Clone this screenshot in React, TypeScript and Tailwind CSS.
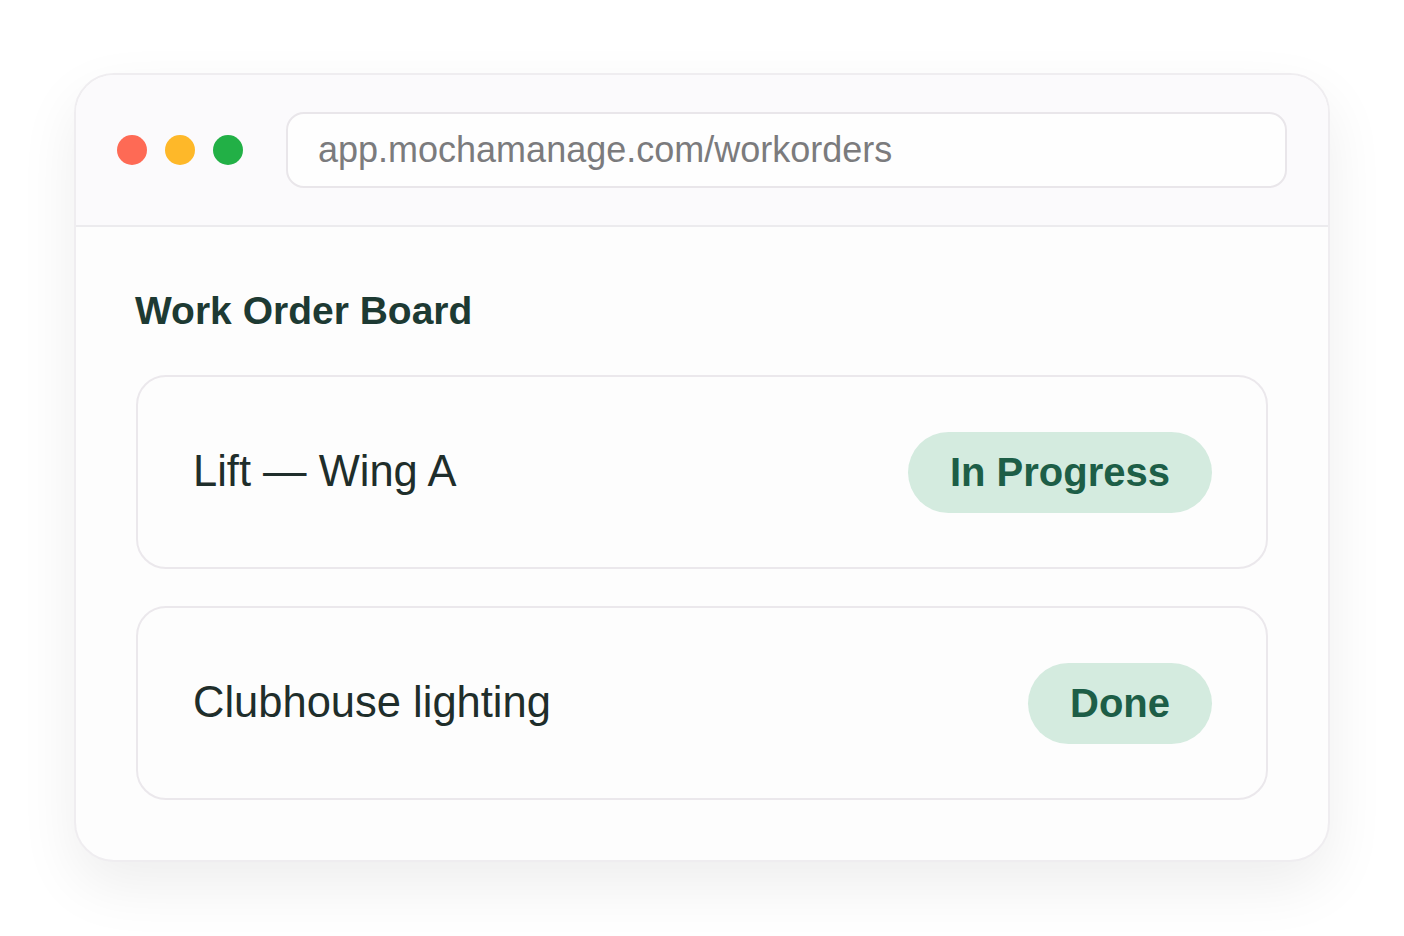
export default function App() {
  const orders = [
    { title: "Lift — Wing A", status: "In Progress" },
    { title: "Clubhouse lighting", status: "Done" },
  ];

  return (
    <div className="w-[1404px] h-[936px] bg-white pt-[73px] pl-[74px] font-['Liberation_Sans',Arial,sans-serif]">
      <div className="w-[1256px] h-[789px] rounded-[40px] border-2 border-[#efedf0] bg-[#fdfdfd] shadow-[0_24px_60px_rgba(0,0,0,0.07)] overflow-hidden flex flex-col">
        {/* Browser chrome */}
        <div className="h-[152px] shrink-0 bg-[#fbfafc] border-b-2 border-[#ecebee] flex items-center pl-[41px] pr-[41px]">
          <div className="flex items-center gap-[18px] shrink-0">
            <span className="w-[30px] h-[30px] rounded-full bg-[#fe6a55]" />
            <span className="w-[30px] h-[30px] rounded-full bg-[#feb829]" />
            <span className="w-[30px] h-[30px] rounded-full bg-[#22b046]" />
          </div>
          <div className="ml-[43px] flex-1 h-[76px] rounded-[18px] border-2 border-[#e9e6ea] bg-[#fefefe] flex items-center pl-[30px]">
            <span className="text-[36px] leading-none text-[#7b7b7d]">app.mochamanage.com/workorders</span>
          </div>
        </div>

        {/* Board */}
        <div className="flex-1 px-[60px] pt-[64px]">
          <h1 className="text-[39px] leading-none font-bold text-[#1d3a33] ml-[-1px]">Work Order Board</h1>
          <div className="mt-[45px] flex flex-col gap-[37px]">
            {orders.map((o) => (
              <div
                key={o.title}
                className="h-[194px] rounded-[30px] border-2 border-[#ebe8ec] bg-[#fdfdfd] flex items-center justify-between pl-[55px] pr-[54px]"
              >
                <span className="text-[43.5px] leading-none text-[#1f2e2b]">{o.title}</span>
                <span className="h-[81px] rounded-full bg-[#d4ebdf] px-[42px] flex items-center text-[40px] leading-none font-bold text-[#1d5e47]">
                  {o.status}
                </span>
              </div>
            ))}
          </div>
        </div>
      </div>
    </div>
  );
}
